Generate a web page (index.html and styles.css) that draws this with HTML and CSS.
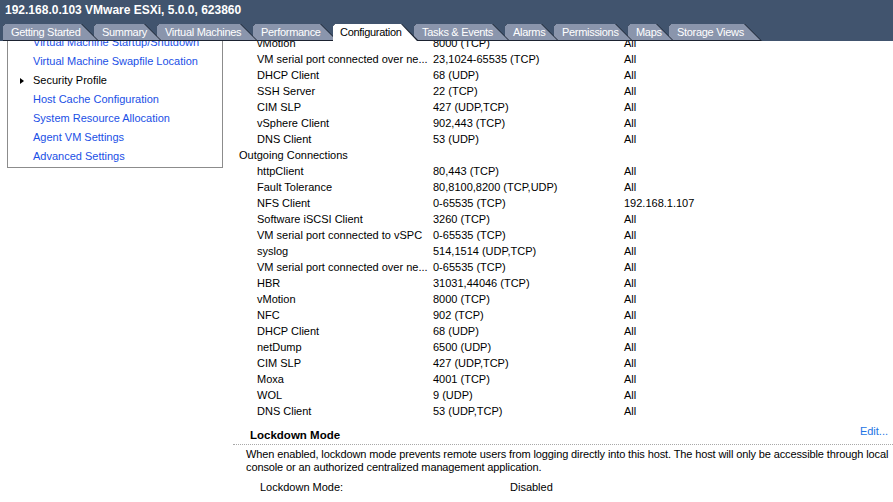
FILE: index.html
```html
<!DOCTYPE html>
<html>
<head>
<meta charset="utf-8">
<link rel="stylesheet" href="styles.css">
</head>
<body>
<div class="header">
  <div class="title">192.168.0.103 VMware ESXi, 5.0.0, 623860</div>
  <div class="tabs">
    <div class="tab"><div class="face"><span>Getting Started</span></div></div>
    <div class="tab"><div class="face"><span>Summary</span></div></div>
    <div class="tab"><div class="face"><span>Virtual Machines</span></div></div>
    <div class="tab"><div class="face"><span>Performance</span></div></div>
    <div class="tab active"><div class="face"><span>Configuration</span></div></div>
    <div class="tab"><div class="face"><span>Tasks &amp; Events</span></div></div>
    <div class="tab"><div class="face"><span>Alarms</span></div></div>
    <div class="tab"><div class="face"><span>Permissions</span></div></div>
    <div class="tab"><div class="face"><span>Maps</span></div></div>
    <div class="tab"><div class="face"><span>Storage Views</span></div></div>
  </div>
</div>
<div class="main">
  <div class="side">
    <div class="side-list">
      <div class="item link">Virtual Machine Startup/Shutdown</div>
      <div class="item link">Virtual Machine Swapfile Location</div>
      <div class="item selected"><i class="bullet"></i>Security Profile</div>
      <div class="item link">Host Cache Configuration</div>
      <div class="item link">System Resource Allocation</div>
      <div class="item link">Agent VM Settings</div>
      <div class="item link">Advanced Settings</div>
    </div>
  </div>
  <div class="content">
    <div class="rules">
      <div class="row"><span class="c1">vMotion</span><span class="c2">8000 (TCP)</span><span class="c3">All</span></div>
      <div class="row"><span class="c1">VM serial port connected over ne...</span><span class="c2">23,1024-65535 (TCP)</span><span class="c3">All</span></div>
      <div class="row"><span class="c1">DHCP Client</span><span class="c2">68 (UDP)</span><span class="c3">All</span></div>
      <div class="row"><span class="c1">SSH Server</span><span class="c2">22 (TCP)</span><span class="c3">All</span></div>
      <div class="row"><span class="c1">CIM SLP</span><span class="c2">427 (UDP,TCP)</span><span class="c3">All</span></div>
      <div class="row"><span class="c1">vSphere Client</span><span class="c2">902,443 (TCP)</span><span class="c3">All</span></div>
      <div class="row"><span class="c1">DNS Client</span><span class="c2">53 (UDP)</span><span class="c3">All</span></div>
      <div class="row group">Outgoing Connections</div>
      <div class="row"><span class="c1">httpClient</span><span class="c2">80,443 (TCP)</span><span class="c3">All</span></div>
      <div class="row"><span class="c1">Fault Tolerance</span><span class="c2">80,8100,8200 (TCP,UDP)</span><span class="c3">All</span></div>
      <div class="row"><span class="c1">NFS Client</span><span class="c2">0-65535 (TCP)</span><span class="c3">192.168.1.107</span></div>
      <div class="row"><span class="c1">Software iSCSI Client</span><span class="c2">3260 (TCP)</span><span class="c3">All</span></div>
      <div class="row"><span class="c1">VM serial port connected to vSPC</span><span class="c2">0-65535 (TCP)</span><span class="c3">All</span></div>
      <div class="row"><span class="c1">syslog</span><span class="c2">514,1514 (UDP,TCP)</span><span class="c3">All</span></div>
      <div class="row"><span class="c1">VM serial port connected over ne...</span><span class="c2">0-65535 (TCP)</span><span class="c3">All</span></div>
      <div class="row"><span class="c1">HBR</span><span class="c2">31031,44046 (TCP)</span><span class="c3">All</span></div>
      <div class="row"><span class="c1">vMotion</span><span class="c2">8000 (TCP)</span><span class="c3">All</span></div>
      <div class="row"><span class="c1">NFC</span><span class="c2">902 (TCP)</span><span class="c3">All</span></div>
      <div class="row"><span class="c1">DHCP Client</span><span class="c2">68 (UDP)</span><span class="c3">All</span></div>
      <div class="row"><span class="c1">netDump</span><span class="c2">6500 (UDP)</span><span class="c3">All</span></div>
      <div class="row"><span class="c1">CIM SLP</span><span class="c2">427 (UDP,TCP)</span><span class="c3">All</span></div>
      <div class="row"><span class="c1">Moxa</span><span class="c2">4001 (TCP)</span><span class="c3">All</span></div>
      <div class="row"><span class="c1">WOL</span><span class="c2">9 (UDP)</span><span class="c3">All</span></div>
      <div class="row"><span class="c1">DNS Client</span><span class="c2">53 (UDP,TCP)</span><span class="c3">All</span></div>
    </div>
    <div class="lock-head">
      <span class="lock-title">Lockdown Mode</span>
      <span class="edit">Edit...</span>
    </div>
    <p class="lock-desc">When enabled, lockdown mode prevents remote users from logging directly into this host. The host will only be accessible through local<br>console or an authorized centralized management application.</p>
    <div class="lock-row"><span class="lk">Lockdown Mode:</span><span>Disabled</span></div>
  </div>
</div>
</body>
</html>
```
FILE: styles.css
```css
* { box-sizing: border-box; }
html, body { margin: 0; padding: 0; }
body {
  width: 893px;
  height: 502px;
  overflow: hidden;
  background: #fff;
  font-family: "Liberation Sans", Arial, sans-serif;
  font-size: 11px;
  color: #000;
}
.header {
  height: 41px;
  background-color: #3c506b;
  background-image: radial-gradient(rgba(255,255,255,0.05) 0.6px, transparent 0.8px);
  background-size: 2px 2px;
  display: flex;
  flex-direction: column;
}
.title {
  height: 24px;
  padding: 3px 0 0 5px;
  line-height: 15px;
  font-weight: bold;
  font-size: 12px;
  color: #fff;
}
.tabs {
  display: flex;
  height: 17px;
  padding-left: 3px;
}
.tab {
  position: relative;
  flex: none;
  height: 17px;
  margin-right: -5px;
  background: #1b2230;
  clip-path: polygon(0 2px, 2px 0, calc(100% - 17px) 0, 100% 100%, 0 100%);
}
.face {
  height: 16px;
  line-height: 17px;
  padding-left: 8px;
  color: #fff;
  letter-spacing: -0.3px;
  white-space: nowrap;
  background: #8a95ac;
  clip-path: polygon(0 2px, 2px 0, calc(100% - 18px) 0, calc(100% - 2px) 100%, 0 100%);
}
.tab.active .face {
  height: 17px;
  background: #fff;
  color: #000;
  padding-left: 7px;
}
.tab:nth-child(1) { width: 96px; z-index: 10; }
.tab:nth-child(2) { width: 68px; z-index: 9; }
.tab:nth-child(3) { width: 101px; z-index: 8; }
.tab:nth-child(4) { width: 85px; z-index: 7; }
.tab:nth-child(5) { width: 86px; z-index: 20; }
.tab:nth-child(6) { width: 96px; z-index: 5; }
.tab:nth-child(7) { width: 54px; z-index: 4; }
.tab:nth-child(8) { width: 79px; z-index: 3; }
.tab:nth-child(9) { width: 46px; z-index: 2; }
.tab:nth-child(10) { width: 93px; z-index: 1; }

.main {
  display: flex;
  align-items: flex-start;
}
.side {
  margin-left: 7px;
  width: 216px;
  height: 127px;
  border: 1px solid #8c8c8c;
  border-top: none;
  overflow: hidden;
  flex: none;
}
.side-list {
  margin-top: -8px;
}
.item {
  height: 19px;
  line-height: 19px;
  padding-left: 25px;
  display: flex;
  align-items: center;
  white-space: nowrap;
}
.item.link { color: #1a4fe6; }
.item.selected { color: #000; }
.bullet {
  display: block;
  width: 0;
  height: 0;
  border-left: 4px solid #000;
  border-top: 3px solid transparent;
  border-bottom: 3px solid transparent;
  margin-left: -13px;
  margin-right: 9px;
}
.content {
  flex: 1;
  min-width: 0;
  margin-left: 14px;
}
.rules {
  margin-top: -6px;
}
.row {
  display: flex;
  height: 16px;
  line-height: 16px;
  white-space: nowrap;
}
.row.group { padding-left: 2px; }
.c1 { width: 196px; padding-left: 20px; }
.c2 { width: 191px; }
.lock-head {
  height: 26px;
  display: flex;
  justify-content: space-between;
  border-bottom: 1px dotted #a8a8a8;
  margin-left: -4px;
  padding-left: 17px;
  padding-right: 5px;
}
.lock-title {
  font-weight: bold;
  font-size: 11.5px;
  line-height: 14px;
  padding-top: 9px;
}
.edit {
  color: #2274e4;
  line-height: 14px;
  padding-top: 5px;
}
.lock-desc {
  margin: 0;
  padding: 3px 0 0 9px;
  line-height: 13px;
  letter-spacing: -0.12px;
  white-space: nowrap;
}
.lock-row {
  display: flex;
  margin-top: 6px;
  line-height: 14px;
  padding-left: 23px;
}
.lk { width: 250px; }
```
